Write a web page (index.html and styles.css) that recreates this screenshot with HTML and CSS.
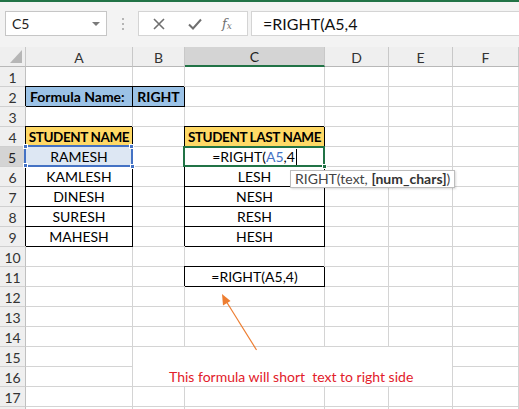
FILE: index.html
```html
<!DOCTYPE html>
<html>
<head>
<meta charset="utf-8">
<link rel="stylesheet" href="styles.css">
</head>
<body>
<div class="app">
  <div class="topbar">
    <div class="namebox"><span>C5</span><span class="dd"></span></div>
    <div class="grip"><i></i><i></i><i></i></div>
    <div class="fbtns">
      <svg class="ico" width="12" height="12" viewBox="0 0 12 12"><path d="M1 1L11 11M11 1L1 11" stroke="#6f6f6f" stroke-width="1.6" fill="none"/></svg>
      <svg class="ico" width="14" height="12" viewBox="0 0 14 12"><path d="M1 6.5L5 10.5L13 1.5" stroke="#6f6f6f" stroke-width="2" fill="none"/></svg>
      <span class="fx">f<sub>x</sub></span>
    </div>
    <div class="finput">=RIGHT(A5,4</div>
  </div>

  <div class="sheet">
    <div class="h corner"><span class="tri"></span></div>
    <div class="h">A</div><div class="h">B</div><div class="h hsel">C</div><div class="h">D</div><div class="h">E</div><div class="h">F</div>

    <div class="rh">1</div><div class="c"></div><div class="c"></div><div class="c"></div><div class="c"></div><div class="c"></div><div class="c"></div>

    <div class="rh">2</div><div class="c bx blue b left">Formula Name:</div><div class="c bx blue b">RIGHT</div><div class="c"></div><div class="c"></div><div class="c"></div><div class="c"></div>

    <div class="rh">3</div><div class="c"></div><div class="c"></div><div class="c"></div><div class="c"></div><div class="c"></div><div class="c"></div>

    <div class="rh">4</div><div class="c bx yel b">STUDENT NAME</div><div class="c"></div><div class="c bx yel b">STUDENT LAST NAME</div><div class="c"></div><div class="c"></div><div class="c"></div>

    <div class="rh rsel">5</div><div class="c bx selfill">RAMESH<span class="refbox"><i class="q q1"></i><i class="q q2"></i><i class="q q3"></i><i class="q q4"></i></span></div><div class="c"></div><div class="c bx edit"><span>=RIGHT(<span class="ref">A5</span>,4</span><span class="caret"></span><span class="active"><i class="q q4 g"></i></span><span class="tip">RIGHT(text, <b>[num_chars]</b>)</span></div><div class="c"></div><div class="c"></div><div class="c"></div>

    <div class="rh">6</div><div class="c bx">KAMLESH</div><div class="c"></div><div class="c bx">LESH</div><div class="c"></div><div class="c"></div><div class="c"></div>

    <div class="rh">7</div><div class="c bx">DINESH</div><div class="c"></div><div class="c bx">NESH</div><div class="c"></div><div class="c"></div><div class="c"></div>

    <div class="rh">8</div><div class="c bx">SURESH</div><div class="c"></div><div class="c bx">RESH</div><div class="c"></div><div class="c"></div><div class="c"></div>

    <div class="rh">9</div><div class="c bx">MAHESH</div><div class="c"></div><div class="c bx">HESH</div><div class="c"></div><div class="c"></div><div class="c"></div>

    <div class="rh">10</div><div class="c"></div><div class="c"></div><div class="c"></div><div class="c"></div><div class="c"></div><div class="c"></div>

    <div class="rh">11</div><div class="c"></div><div class="c"></div><div class="c bx">=RIGHT(A5,4)</div><div class="c"></div><div class="c"></div><div class="c"></div>

    <div class="rh">12</div><div class="c"></div><div class="c"></div><div class="c"></div><div class="c"></div><div class="c"></div><div class="c"></div>

    <div class="rh">13</div><div class="c"></div><div class="c"></div><div class="c"></div><div class="c"></div><div class="c"></div><div class="c"></div>

    <div class="rh">14</div><div class="c"></div><div class="c"></div><div class="c"></div><div class="c"></div><div class="c"></div><div class="c"></div>

    <div class="rh">15</div><div class="c"></div><div class="c"></div><div class="c"></div><div class="c"></div><div class="c"></div><div class="c"></div>

    <div class="rh">16</div><div class="c"></div><div class="c"></div><div class="c"></div><div class="c"></div><div class="c"></div><div class="c"></div>

    <div class="rh">17</div><div class="c"></div><div class="c"></div><div class="c"></div><div class="c"></div><div class="c"></div><div class="c"></div>

    <div class="rh"></div><div class="c"></div><div class="c"></div><div class="c"></div><div class="c"></div><div class="c"></div><div class="c"></div>
  </div>

  <div class="textbox">This formula will short  text to right side</div>
  <svg class="arrow" width="519" height="409" viewBox="0 0 519 409">
    <line x1="256.5" y1="350" x2="226" y2="301" stroke="#ed7d31" stroke-width="1.2"/>
    <polygon points="222,294 223,305.5 230.5,301" fill="#ed7d31"/>
  </svg>
</div>
</body>
</html>
```

FILE: styles.css
```css
html, body {
  margin: 0;
  padding: 0;
  background: #fff;
}
body {
  width: 519px;
  height: 409px;
  overflow: hidden;
  font-family: "Lato", "Liberation Sans", sans-serif;
}
.app {
  position: relative;
  width: 519px;
  height: 409px;
  overflow: hidden;
}
.topbar {
  box-sizing: border-box;
  height: 47px;
  border-top: 2px solid #217346;
  background: #f3f3f3;
  display: flex;
  align-items: flex-start;
  padding-top: 9px;
  padding-left: 5px;
}
.namebox {
  box-sizing: border-box;
  width: 102px;
  height: 25px;
  background: #fff;
  border: 1px solid #c6c6c6;
  display: flex;
  align-items: center;
  justify-content: space-between;
  padding: 0 6px 0 6px;
  font-size: 14px;
  color: #222;
}
.dd {
  width: 0;
  height: 0;
  border-left: 4px solid transparent;
  border-right: 4px solid transparent;
  border-top: 4px solid #7a7a7a;
}
.grip {
  width: 31px;
  height: 25px;
  display: flex;
  flex-direction: column;
  align-items: center;
  justify-content: center;
  gap: 3px;
}
.grip i {
  display: block;
  width: 2px;
  height: 2px;
  background: #b5b5b5;
}
.fbtns {
  box-sizing: border-box;
  width: 110px;
  height: 25px;
  background: #fff;
  border: 1px solid #d4d4d4;
  display: flex;
  align-items: center;
  padding-left: 14px;
  gap: 23px;
}
.fx {
  font-family: "DejaVu Serif", "Liberation Serif", serif;
  font-style: italic;
  font-size: 13px;
  color: #6f6f6f;
  margin-left: -3px;
}
.fx sub {
  font-size: 9px;
  vertical-align: -1px;
}
.finput {
  box-sizing: border-box;
  margin-left: 3px;
  flex: 1;
  height: 25px;
  background: #fff;
  border: 1px solid #d4d4d4;
  border-right: none;
  font-size: 16px;
  line-height: 23px;
  padding-left: 11px;
  color: #111;
}

.sheet {
  display: grid;
  grid-template-columns: 26px 107px 52px 140px 64px 64px 66px;
  grid-auto-rows: 20px;
  font-size: 14px;
}
.sheet > div {
  box-sizing: border-box;
  border-right: 1px solid #d4d4d4;
  border-bottom: 1px solid #d4d4d4;
  display: flex;
  align-items: center;
  justify-content: center;
  white-space: nowrap;
  color: #000;
}
.sheet > .h {
  background: #efefef;
  border-right-color: #c8c8c8;
  border-bottom-color: #b8b8b8;
  color: #333;
  font-size: 14px;
  padding-top: 1px;
}
.sheet > .hsel {
  background: #d4d4d4;
  border-bottom: 2px solid #217346;
  color: #222;
}
.corner {
  position: relative;
}
.tri {
  position: absolute;
  right: 3px;
  bottom: 3px;
  width: 0;
  height: 0;
  border-left: 12px solid transparent;
  border-bottom: 13px solid #b6b6b6;
}
.sheet > .rh {
  background: #efefef;
  border-right-color: #c0c0c0;
  border-bottom-color: #d0d0d0;
  color: #333;
  font-size: 14px;
  padding-top: 1px;
}
.sheet > .rsel {
  background: #d4d4d4;
  border-right: 2px solid #217346;
  color: #222;
}
.sheet > .bx {
  border-right-color: #000;
  border-bottom-color: #000;
  box-shadow: -1px -1px 0 0 #000;
}
.b {
  font-weight: bold;
}
.sheet > .left {
  justify-content: flex-start;
  padding-left: 4px;
}
.blue {
  background: #9bc2e6;
}
.yel {
  background: #ffd966;
  font-size: 13.5px;
  letter-spacing: -0.4px;
}
.selfill {
  position: relative;
  background: #dde7f3;
}
.refbox {
  position: absolute;
  left: -2px;
  top: -2px;
  right: -1px;
  bottom: -1px;
  border: 2px solid #4472c4;
}
.q {
  position: absolute;
  width: 5px;
  height: 5px;
  background: #4472c4;
  border: 1px solid #fff;
  box-sizing: border-box;
}
.q1 { left: -3px; top: -3px; }
.q2 { right: -3px; top: -3px; }
.q3 { left: -3px; bottom: -3px; }
.q4 { right: -4px; bottom: -4px; }
.edit {
  position: relative;
  overflow: visible;
}
.ref {
  color: #4472c4;
}
.caret {
  display: inline-block;
  width: 1px;
  height: 16px;
  background: #000;
  margin-left: 1px;
}
.active {
  position: absolute;
  left: -2px;
  top: -1px;
  right: -1px;
  bottom: -1px;
  border: 2px solid #217346;
}
.q.g {
  background: #217346;
  right: -4px;
  bottom: -4px;
}
.tip {
  position: absolute;
  left: 105px;
  top: 23px;
  box-sizing: border-box;
  height: 18px;
  padding: 0 4px;
  background: #fff;
  border: 1px solid #bdbdbd;
  box-shadow: 1px 1px 2px rgba(0,0,0,0.15);
  font-family: "Lato", "Liberation Sans", sans-serif;
  font-size: 14px;
  line-height: 16px;
  color: #444;
  z-index: 5;
}
.tip b {
  color: #333;
}

.textbox {
  position: absolute;
  left: 133px;
  top: 347px;
  width: 319px;
  height: 39px;
  background: #fff;
  box-sizing: border-box;
  padding-left: 36px;
  padding-top: 23px;
  font-size: 14px;
  line-height: 14px;
  color: #e2202a;
  white-space: pre;
}
.arrow {
  position: absolute;
  left: 0;
  top: 0;
  pointer-events: none;
}
```
